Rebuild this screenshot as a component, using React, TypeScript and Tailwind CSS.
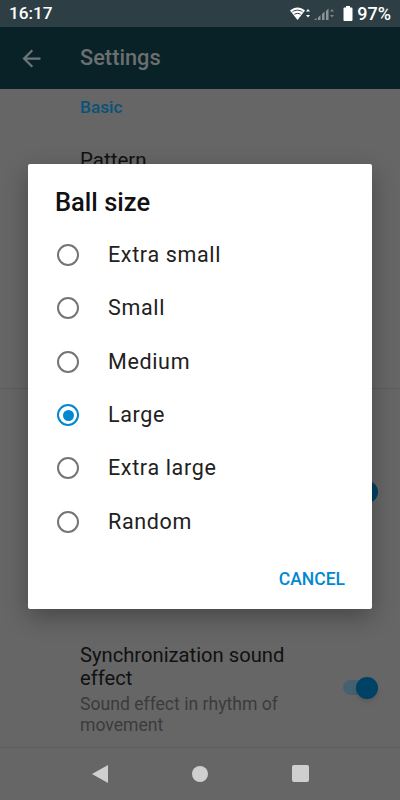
const options = ["Extra small", "Small", "Medium", "Large", "Extra large", "Random"];

function Radio({ checked }: { checked: boolean }) {
  return (
    <div
      className={`w-[22px] h-[22px] rounded-full border-2 flex items-center justify-center ${
        checked ? "border-[#0288d1]" : "border-[#757575]"
      }`}
    >
      {checked && <div className="w-[11px] h-[11px] rounded-full bg-[#0288d1]" />}
    </div>
  );
}

function StatusIcons() {
  return (
    <div className="flex items-center">
      {/* wifi */}
      <svg width="21" height="14" viewBox="0 0 21 14">
        <path d="M0 3.500C2.500 1.400 5 .5 7.500.5s5 .9 7.500 3L7.500 13z" fill="#fff" />
        <path d="M2.500 4.800C4 3.700 5.700 3.200 7.500 3.200s3.500.5 5 1.600M4.400 7.300c1-.6 2-.9 3.100-.9s2.100.3 3.100.9" stroke="#2d3e44" strokeWidth="1" fill="none" />
        <path d="M18 2l2 2.500h-4zM18 10.500l2-2.500h-4z" fill="#fff" />
      </svg>
      {/* signal */}
      <svg width="22" height="14" viewBox="0 0 22 14" className="ml-[2px]">
        <path d="M1 13h2.500v-2L1 13zM5 13h2.500V8L5 10.500zM9 13h2.500V4.500L9 7zM13 13h2.500V1.500L13 4z" fill="#8b9598" />
        <path d="M19 2l2 2.500h-4zM19 10.500l2-2.500h-4z" fill="#7c878a" />
      </svg>
      {/* battery */}
      <svg width="10" height="15" viewBox="0 0 10 15" className="ml-[8px]">
        <path d="M3 0h4v1.500h1.500a1 1 0 0 1 1 1V14a1 1 0 0 1-1 1h-7a1 1 0 0 1-1-1V2.500a1 1 0 0 1 1-1H3z" fill="#fff" />
      </svg>
      <span className="ml-[4px] text-[18px] leading-[27px] font-medium text-white">97%</span>
    </div>
  );
}

export default function App() {
  return (
    <div className="relative w-[400px] h-[800px] overflow-hidden flex flex-col bg-[#666666] font-['Roboto',sans-serif]">
      {/* Status bar */}
      <div className="h-[27px] shrink-0 bg-[#2d3e44] flex items-center justify-between pl-[9px] pr-[9px]">
        <span className="text-[17.200px] leading-[27px] font-medium text-white">16:17</span>
        <StatusIcons />
      </div>

      {/* Toolbar */}
      <div className="h-[62px] shrink-0 bg-[#082228] flex items-center pl-[17.500px]">
        <svg width="27" height="27" viewBox="0 0 24 24" fill="#6c7678">
          <path d="M20 11H7.830l5.590-5.590L12 4l-8 8 8 8 1.410-1.410L7.830 13H20v-2z" />
        </svg>
        <span className="ml-[35.500px] text-[21.800px] font-medium text-[#6b6f70]">Settings</span>
      </div>

      {/* Settings list, dimmed by the dialog */}
      <div className="flex-1 flex flex-col pl-[80px]">
        <div className="pt-[7px] text-[17.300px] leading-[22px] font-medium text-[#0a5277]">Basic</div>
        <div className="pt-[29px] text-[20.500px] leading-[26px] text-[#111]">Pattern</div>
      </div>
      <div className="absolute left-0 right-0 top-[388px] h-px bg-[#5c5c5c]" />
      <div className="absolute top-[481px] left-[356px] w-[22px] h-[22px] rounded-full bg-[#004166]" />
      <div className="absolute left-[80px] top-[644px] w-[320px] flex items-start">
        <div className="w-[245px]">
          <div className="text-[20.200px] leading-[23px] text-[#111]">Synchronization sound effect</div>
          <div className="mt-[4px] text-[17.600px] leading-[21px] text-[#3b3b3b]">Sound effect in rhythm of movement</div>
        </div>
        <div className="relative ml-[18px] mt-[36px] w-[35px] h-[15px] rounded-full bg-[#45606e]">
          <div className="absolute -top-[3.500px] right-0 w-[22px] h-[22px] rounded-full bg-[#004166] shadow-md" />
        </div>
      </div>

      {/* Nav bar */}
      <div className="h-[53px] shrink-0 border-t border-[#5c5c5c] flex items-center justify-center bg-[#666666]">
        <div className="flex items-center gap-[84px] pb-[1px]">
          <svg width="16" height="18" viewBox="0 0 16 18">
            <path d="M16 0v18L0 9z" fill="#cfcfcf" />
          </svg>
          <div className="w-[16px] h-[16px] rounded-full bg-[#cfcfcf]" />
          <div className="w-[17px] h-[17px] rounded-[2px] bg-[#cfcfcf]" />
        </div>
      </div>

      {/* Dialog */}
      <div className="absolute left-[28px] top-[164px] w-[344px] h-[445px] bg-white rounded-[2px] shadow-[0_8px_24px_rgba(0,0,0,0.3)] flex flex-col">
        <div className="pl-[27px] pt-[22px] text-[25.500px] leading-[32px] font-medium text-[#111]">Ball size</div>
        <div className="mt-[10.500px] flex flex-col">
          {options.map((o) => (
            <div key={o} className="h-[53.300px] flex items-center pl-[29px]">
              <Radio checked={o === "Large"} />
              <span className="ml-[29px] text-[21.500px] tracking-[0.65px] text-[#212121]">{o}</span>
            </div>
          ))}
        </div>
        <div className="mt-auto mb-[19px] pr-[27px] text-right text-[17.500px] leading-[22px] font-medium text-[#0288d1]">CANCEL</div>
      </div>
    </div>
  );
}
